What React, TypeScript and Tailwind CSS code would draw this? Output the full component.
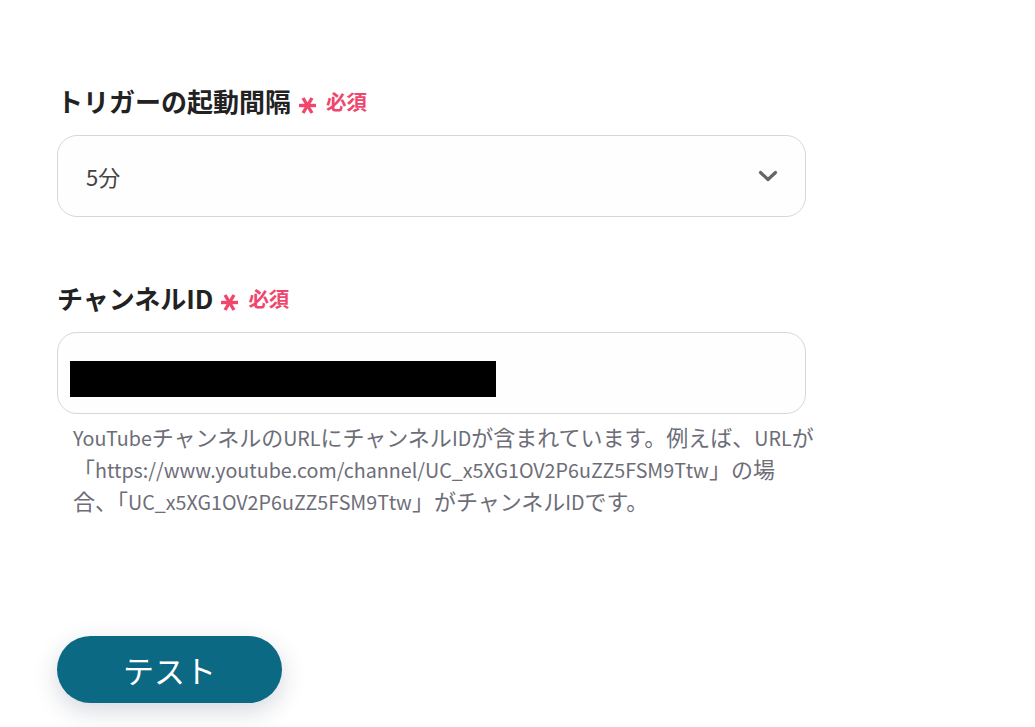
import React from "react";

const font = { fontFamily: '"Noto Sans CJK JP", "Noto Sans", sans-serif' };

function Asterisk() {
  return (
    <svg width="19" height="17" viewBox="0 0 19 17" fill="none" className="relative top-[4px]">
      <g stroke="#f0466c" strokeWidth="3.4" strokeLinecap="butt">
        <path d="M1 8.5 H18" />
        <path d="M5 1 L14 16" />
        <path d="M14 1 L5 16" />
      </g>
    </svg>
  );
}

function Required() {
  return (
    <span className="ml-[7px] inline-flex items-center text-[#f0466c]">
      <Asterisk />
      <span className="ml-[9px] text-[20.5px] font-bold leading-none">必須</span>
    </span>
  );
}

function Mixed({ text }: { text: string }) {
  const parts = text.split(/([A-Za-z0-9_:/.\-]+)/);
  return (
    <>
      {parts.map((p, i) =>
        /^[A-Za-z0-9_:/.\-]+$/.test(p) ? (
          <span key={i} className="text-[19.7px]">
            {p}
          </span>
        ) : (
          <span key={i}>{p}</span>
        )
      )}
    </>
  );
}

export default function App() {
  return (
    <div className="min-h-[727px] w-[1035px] bg-white" style={font}>
      <div className="pl-[57px] pt-[83px] w-[806px]">
        <div className="flex items-center h-[36px] text-[26px] font-bold text-[#222] leading-none">
          <span>トリガーの起動間隔</span>
          <Required />
        </div>
        <div className="mt-[16px] h-[82px] rounded-[20px] border border-[#d6d6e2] bg-[#fefeff] flex items-center justify-between pl-[28px] pr-[27px]">
          <span className="text-[22px] text-[#444] leading-none">5分</span>
          <svg width="20" height="12" viewBox="0 0 20 12" fill="none">
            <path d="M2.5 2.5 L10 9.5 L17.5 2.5" stroke="#666" strokeWidth="3.2" strokeLinecap="round" strokeLinejoin="round" />
          </svg>
        </div>

        <div className="mt-[63px] flex items-center h-[36px] text-[26px] font-bold text-[#222] leading-none">
          <span>チャンネルID</span>
          <Required />
        </div>
        <div className="mt-[16px] h-[82px] rounded-[20px] border border-[#d6d6e2] bg-[#fefeff] flex items-start pl-[12px] pt-[28px]">
          <div className="w-[426px] h-[36px] bg-black" />
        </div>
        <div className="mt-[7px] pl-[16px] text-[22px] leading-[31px] text-[#6d6d78]">
          <div className="whitespace-nowrap">
            <Mixed text="YouTubeチャンネルのURLにチャンネルIDが含まれています。例えば、URLが" />
          </div>
          <div className="whitespace-nowrap">
            <Mixed text="「https://www.youtube.com/channel/UC_x5XG1OV2P6uZZ5FSM9Ttw」の場" />
          </div>
          <div className="whitespace-nowrap">
            <Mixed text="合、「UC_x5XG1OV2P6uZZ5FSM9Ttw」がチャンネルIDです。" />
          </div>
        </div>

        <button className="mt-[119px] w-[225px] h-[67px] rounded-full bg-[#0c6983] text-white text-[31px] leading-none shadow-[0_8px_24px_rgba(30,40,80,0.18)]">
          テスト
        </button>
      </div>
    </div>
  );
}
